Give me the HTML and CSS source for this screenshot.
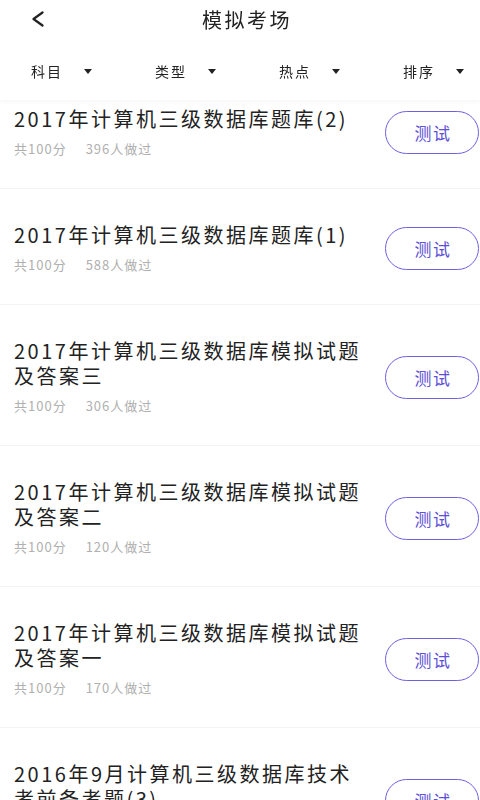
FILE: index.html
```html
<!DOCTYPE html>
<html lang="zh-CN">
<head>
    <meta charset="UTF-8">
    <meta name="viewport" content="width=device-width, initial-scale=1.0">
    <title>模拟考场</title>
    <link rel="stylesheet" href="styles.css">
</head>
<body>
    <header class="topbar">
        <div class="titlebar">
            <a class="back" href="#">
                <svg width="14" height="16" viewBox="0 0 14 16">
                    <polyline points="11.5,1.5 2.5,8 11.5,14.5" fill="none" stroke="#222" stroke-width="2.2" stroke-linecap="round" stroke-linejoin="round"/>
                </svg>
            </a>
            <h1>模拟考场</h1>
        </div>
        <div class="filters">
            <div class="filter">科目<span class="caret"></span></div>
            <div class="filter">类型<span class="caret"></span></div>
            <div class="filter">热点<span class="caret"></span></div>
            <div class="filter">排序<span class="caret"></span></div>
        </div>
    </header>

    <main class="list">
        <div class="item">
            <div class="info">
                <div class="name">2017年计算机三级数据库题库(2)</div>
                <div class="meta"><span>共100分</span><span>396人做过</span></div>
            </div>
            <button class="test-btn">测试</button>
        </div>
        <div class="item">
            <div class="info">
                <div class="name">2017年计算机三级数据库题库(1)</div>
                <div class="meta"><span>共100分</span><span>588人做过</span></div>
            </div>
            <button class="test-btn">测试</button>
        </div>
        <div class="item">
            <div class="info">
                <div class="name">2017年计算机三级数据库模拟试题及答案三</div>
                <div class="meta"><span>共100分</span><span>306人做过</span></div>
            </div>
            <button class="test-btn">测试</button>
        </div>
        <div class="item">
            <div class="info">
                <div class="name">2017年计算机三级数据库模拟试题及答案二</div>
                <div class="meta"><span>共100分</span><span>120人做过</span></div>
            </div>
            <button class="test-btn">测试</button>
        </div>
        <div class="item">
            <div class="info">
                <div class="name">2017年计算机三级数据库模拟试题及答案一</div>
                <div class="meta"><span>共100分</span><span>170人做过</span></div>
            </div>
            <button class="test-btn">测试</button>
        </div>
        <div class="item">
            <div class="info">
                <div class="name">2016年9月计算机三级数据库技术考前备考题(3)</div>
                <div class="meta"><span>共100分</span><span>215人做过</span></div>
            </div>
            <button class="test-btn">测试</button>
        </div>
    </main>
</body>
</html>
```

FILE: styles.css
```css
body {
    margin: 0;
    background: #fff;
    font-family: "Noto Sans CJK SC", "Noto Sans", sans-serif;
    color: #222;
}
.topbar {
    position: fixed;
    top: 0;
    left: 0;
    right: 0;
    height: 100px;
    background: #fff;
    box-shadow: 0 2px 4px rgba(0, 0, 0, 0.04);
    z-index: 10;
}
.titlebar {
    position: relative;
    height: 38px;
    display: flex;
    align-items: center;
    justify-content: center;
}
.back {
    position: absolute;
    left: 31px;
    top: 11px;
    display: block;
    line-height: 0;
}
.titlebar h1 {
    margin: 0;
    font-size: 20px;
    font-weight: normal;
    letter-spacing: 2.5px;
    line-height: 25px;
    padding-left: 14px;
}
.filters {
    display: flex;
    align-items: center;
    justify-content: space-between;
    height: 58px;
    padding: 4px 16px 0 31px;
}
.filter {
    display: flex;
    align-items: center;
    font-size: 14px;
    letter-spacing: 2px;
    color: #222;
}
.caret {
    margin-left: 21px;
    width: 0;
    height: 0;
    border-left: 4.5px solid transparent;
    border-right: 4.5px solid transparent;
    border-top: 5px solid #222;
}
.list {
    padding-top: 73px;
}
.item {
    display: flex;
    align-items: center;
    padding: 33px 1px 29px 14px;
    border-bottom: 1px solid #f4f4f4;
}
.info {
    flex: 1;
    min-width: 0;
}
.name {
    font-size: 20px;
    line-height: 25px;
    letter-spacing: 2.5px;
    color: #222;
}
.meta {
    margin-top: 8px;
    font-size: 13px;
    line-height: 20px;
    letter-spacing: 1px;
    color: #b0b0b0;
}
.meta span {
    margin-right: 19px;
}
.test-btn {
    flex-shrink: 0;
    margin-left: 16px;
    width: 94px;
    height: 43px;
    border: 1.8px solid #6f60e2;
    border-radius: 22px;
    background: #fff;
    color: #5d50d8;
    font-family: "Noto Sans CJK SC", sans-serif;
    font-size: 17px;
    letter-spacing: 1.5px;
    padding: 0 0 0 2px;
}
```
